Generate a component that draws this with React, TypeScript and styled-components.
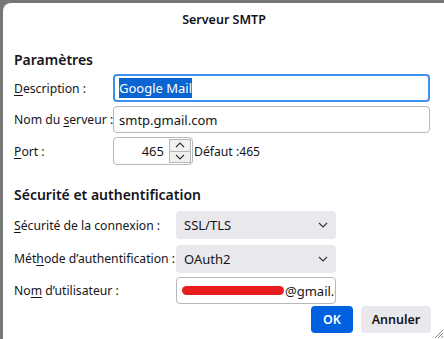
import React from 'react'
import styled, { createGlobalStyle } from 'styled-components'

const Global = createGlobalStyle`
	html, body {
		margin: 0;
		padding: 0;
		background: #777777;
		overflow: hidden;
	}
	body {
		font-family: 'Noto Sans', 'Open Sans', sans-serif;
		color: #15141a;
	}
`

const Dialog = styled.div`
	margin: 3px 0 0 3px;
	height: 336px;
	background: #ffffff;
	border-radius: 8px 0 0 0;
	box-sizing: border-box;
	position: relative;
`

const Title = styled.div`
	height: 33px;
	display: flex;
	align-items: center;
	justify-content: center;
	font-size: 12.5px;
	font-weight: 600;
	padding-left: 1px;
`

const Content = styled.div`
	padding: 0 11px 0 11px;
`

const SectionTitle = styled.div<{ top: number }>`
	margin-top: ${(p) => p.top}px;
	height: 20px;
	line-height: 20px;
	font-size: 14px;
	font-weight: 600;
`

const Grid = styled.div<{ labelWidth: number; top: number }>`
	display: grid;
	grid-template-columns: ${(p) => p.labelWidth}px auto;
	row-gap: 4px;
	margin-top: ${(p) => p.top}px;
	align-items: center;
`

const Label = styled.label`
	font-size: 12.2px;
	white-space: nowrap;
	u {
		text-decoration-thickness: 1px;
		text-underline-offset: 2px;
	}
`

const TextBox = styled.div<{ focused?: boolean; width: number; height: number }>`
	width: ${(p) => p.width}px;
	height: ${(p) => p.height}px;
	box-sizing: border-box;
	border: ${(p) => (p.focused ? '2px solid #3c91f0' : '1px solid #b8b8bb')};
	border-radius: 4px;
	display: flex;
	align-items: center;
	padding-left: ${(p) => (p.focused ? 4 : 5)}px;
	font-size: 13px;
	overflow: hidden;
	white-space: nowrap;
	background: #fff;
`

const Selected = styled.span`
	background: #0a64d2;
	color: #ffffff;
	padding: 1px 0;
`

const PortRow = styled.div`
	display: flex;
	align-items: center;
`

const PortBox = styled.div`
	width: 80px;
	height: 28px;
	box-sizing: border-box;
	border: 1px solid #b8b8bb;
	border-radius: 4px;
	display: flex;
	align-items: center;
	font-size: 13px;
	padding-right: 1px;
`

const PortValue = styled.span`
	flex: 1;
	text-align: right;
	padding-right: 5px;
`

const Spinner = styled.div`
	width: 22px;
	height: 24px;
	display: flex;
	flex-direction: column;
	border: 1px solid #b8b8bb;
	box-sizing: border-box;
	background: #f0f0f0;
`

const SpinHalf = styled.div<{ bottom?: boolean }>`
	flex: 1;
	display: flex;
	align-items: center;
	justify-content: center;
	border-top: ${(p) => (p.bottom ? '1px solid #b8b8bb' : 'none')};
`

const Hint = styled.span`
	font-size: 12.2px;
	margin-left: 1px;
`

const Select = styled.div<{ spaced?: boolean }>`
	width: 160px;
	height: 28px;
	margin-top: ${(p) => (p.spaced ? 2 : 0)}px;
	box-sizing: border-box;
	background: #e9e9ed;
	border-radius: 4px;
	display: flex;
	align-items: center;
	justify-content: space-between;
	padding: 0 8px;
	font-size: 13px;
`

const Redact = styled.span`
	display: inline-block;
	flex: none;
	width: 102px;
	height: 9px;
	border-radius: 5px;
	background: #e81c1c;
	margin-right: 1px;
`

const Buttons = styled.div`
	display: flex;
	justify-content: flex-end;
	gap: 8px;
	margin-top: 2px;
	padding-right: 2px;
`

const Button = styled.div<{ primary?: boolean; width: number }>`
	width: ${(p) => p.width}px;
	height: 27px;
	border-radius: 4px;
	display: flex;
	align-items: center;
	justify-content: center;
	font-size: 12.5px;
	font-weight: 600;
	background: ${(p) => (p.primary ? '#0061e0' : '#e9e9ed')};
	color: ${(p) => (p.primary ? '#ffffff' : '#15141a')};
`

const Grip = styled.svg`
	position: absolute;
	right: 0;
	bottom: 0;
`

const Chevron = ({ up }: { up?: boolean }) => (
	<svg width="10" height="6" viewBox="0 0 10 6">
		<path
			d={up ? 'M1 5 L5 1 L9 5' : 'M1 1 L5 5 L9 1'}
			fill="none"
			stroke="#333"
			strokeWidth="1.1"
		/>
	</svg>
)

const App = () => (
	<>
		<Global />
		<Dialog>
			<Title>Serveur SMTP</Title>
			<Content>
				<SectionTitle top={14}>Paramètres</SectionTitle>
				<Grid labelWidth={99} top={4}>
					<Label>
						<u>D</u>escription :
					</Label>
					<TextBox focused width={317} height={28}>
						<Selected>Google Mail</Selected>
					</TextBox>
					<Label>
						Nom du <u>s</u>erveur :
					</Label>
					<TextBox width={317} height={27}>
						smtp.gmail.com
					</TextBox>
					<Label>
						<u>P</u>ort :
					</Label>
					<PortRow>
						<PortBox>
							<PortValue>465</PortValue>
							<Spinner>
								<SpinHalf>
									<Chevron up />
								</SpinHalf>
								<SpinHalf bottom>
									<Chevron />
								</SpinHalf>
							</Spinner>
						</PortBox>
						<Hint>Défaut :465</Hint>
					</PortRow>
				</Grid>
				<SectionTitle top={20}>Sécurité et authentification</SectionTitle>
				<Grid labelWidth={162} top={6}>
					<Label>
						<u>S</u>écurité de la connexion :
					</Label>
					<Select>
						SSL/TLS
						<Chevron />
					</Select>
					<Label>
						Mét<u>h</u>ode d’authentification :
					</Label>
					<Select spaced>
						OAuth2
						<Chevron />
					</Select>
					<Label>
						No<u>m</u> d’utilisateur :
					</Label>
					<TextBox width={160} height={27}>
						<Redact />
						@gmail.com
					</TextBox>
				</Grid>
				<Buttons>
					<Button primary width={42}>
						OK
					</Button>
					<Button width={70}>Annuler</Button>
				</Buttons>
			</Content>
			<Grip width="11" height="11" viewBox="0 0 11 11">
				<path d="M10 2 L2 10 M10 5 L5 10 M10 8 L8 10" stroke="#888" strokeWidth="1" />
			</Grip>
		</Dialog>
	</>
)

export default App
